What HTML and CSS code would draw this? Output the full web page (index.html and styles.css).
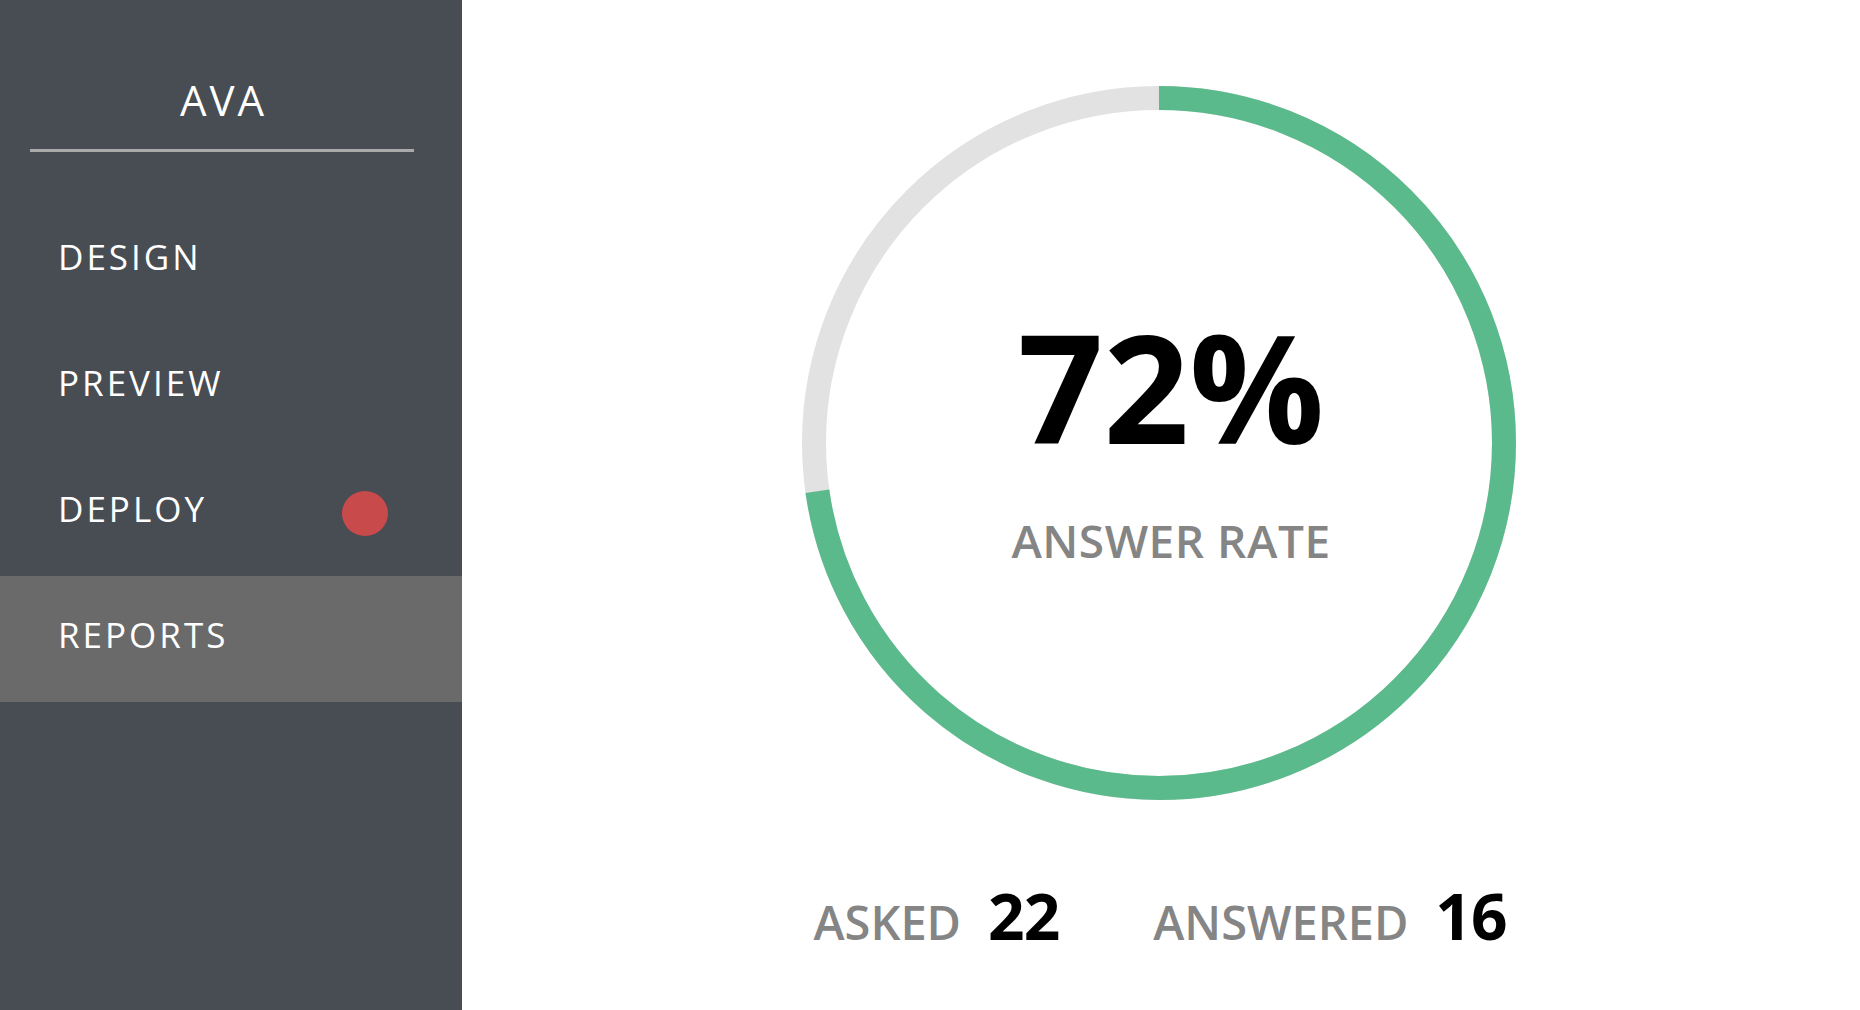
FILE: index.html
```html
<!DOCTYPE html>
<html lang="en">
<head>
<meta charset="utf-8">
<title>AVA Reports</title>
<link rel="stylesheet" href="styles.css">
</head>
<body>
<div class="app">
  <aside class="sidebar">
    <div class="brand">
      <div class="brand-name">AVA</div>
      <div class="brand-rule"></div>
    </div>
    <nav class="nav">
      <div class="nav-item"><span class="nav-label">DESIGN</span></div>
      <div class="nav-item"><span class="nav-label">PREVIEW</span></div>
      <div class="nav-item"><span class="nav-label">DEPLOY</span><span class="nav-dot"></span></div>
      <div class="nav-item active"><span class="nav-label">REPORTS</span></div>
    </nav>
  </aside>
  <main class="main">
    <div class="gauge">
      <svg class="gauge-svg" width="714" height="714" viewBox="0 0 714 714">
        <circle cx="357" cy="357" r="345" fill="none" stroke="#e2e2e2" stroke-width="24"/>
        <circle cx="357" cy="357" r="345" fill="none" stroke="#5bba8c" stroke-width="24"
                stroke-dasharray="1576.6 3000" transform="rotate(-90 357 357)"/>
      </svg>
      <div class="gauge-text">
        <div class="gauge-value">72%</div>
        <div class="gauge-label">ANSWER RATE</div>
      </div>
    </div>
    <div class="stats">
      <div class="stat"><span class="stat-label">ASKED</span><span class="stat-value">22</span></div>
      <div class="stat"><span class="stat-label">ANSWERED</span><span class="stat-value">16</span></div>
    </div>
  </main>
</div>
</body>
</html>
```

FILE: styles.css
```css
* { box-sizing: border-box; }

html, body {
  margin: 0;
  padding: 0;
  height: 100%;
}

body {
  font-family: "Open Sans", "Liberation Sans", sans-serif;
  background: #ffffff;
}

.app {
  display: flex;
  height: 1010px;
}

.sidebar {
  width: 462px;
  flex: 0 0 462px;
  background: #484c53;
  color: #ffffff;
  display: flex;
  flex-direction: column;
}

.brand {
  height: 198px;
  padding: 79px 48px 0 30px;
  display: flex;
  flex-direction: column;
  align-items: center;
}

.brand-name {
  font-size: 42px;
  line-height: 1;
  letter-spacing: 3px;
  padding-left: 3px;
}

.brand-rule {
  margin-top: 28px;
  width: 100%;
  height: 3px;
  background: #aaaaaa;
}

.nav {
  display: flex;
  flex-direction: column;
}

.nav-item {
  height: 126px;
  display: flex;
  align-items: center;
  padding-left: 58px;
  padding-right: 74px;
}

.nav-item.active {
  background: #6a6a6a;
}

.nav-label {
  font-size: 35px;
  line-height: 1;
  letter-spacing: 3px;
  margin-bottom: 10px;
}

.nav-dot {
  margin-left: auto;
  width: 46px;
  height: 45px;
  border-radius: 50%;
  background: #c84a4a;
}

.main {
  flex: 1;
  display: flex;
  flex-direction: column;
  align-items: center;
  padding-right: 4px;
}

.gauge {
  margin-top: 86px;
  width: 714px;
  height: 714px;
  display: grid;
}

.gauge-svg,
.gauge-text {
  grid-area: 1 / 1;
}

.gauge-text {
  display: flex;
  flex-direction: column;
  align-items: center;
  justify-content: center;
  padding-left: 24px;
  padding-bottom: 12px;
}

.gauge-value {
  font-size: 150px;
  font-weight: 700;
  line-height: 1;
  color: #000000;
}

.gauge-label {
  margin-top: 56px;
  font-size: 46px;
  font-weight: 600;
  line-height: 1;
  color: #858585;
  letter-spacing: 0.5px;
}

.stats {
  margin-top: 84px;
  display: flex;
  align-items: baseline;
  gap: 94px;
  padding-left: 2px;
}

.stat {
  display: flex;
  align-items: baseline;
  gap: 27px;
}

.stat-label {
  font-size: 47px;
  font-weight: 600;
  line-height: 1;
  color: #858585;
}

.stat-value {
  font-size: 64px;
  font-weight: 700;
  line-height: 1;
  color: #000000;
  letter-spacing: -1px;
}
```
